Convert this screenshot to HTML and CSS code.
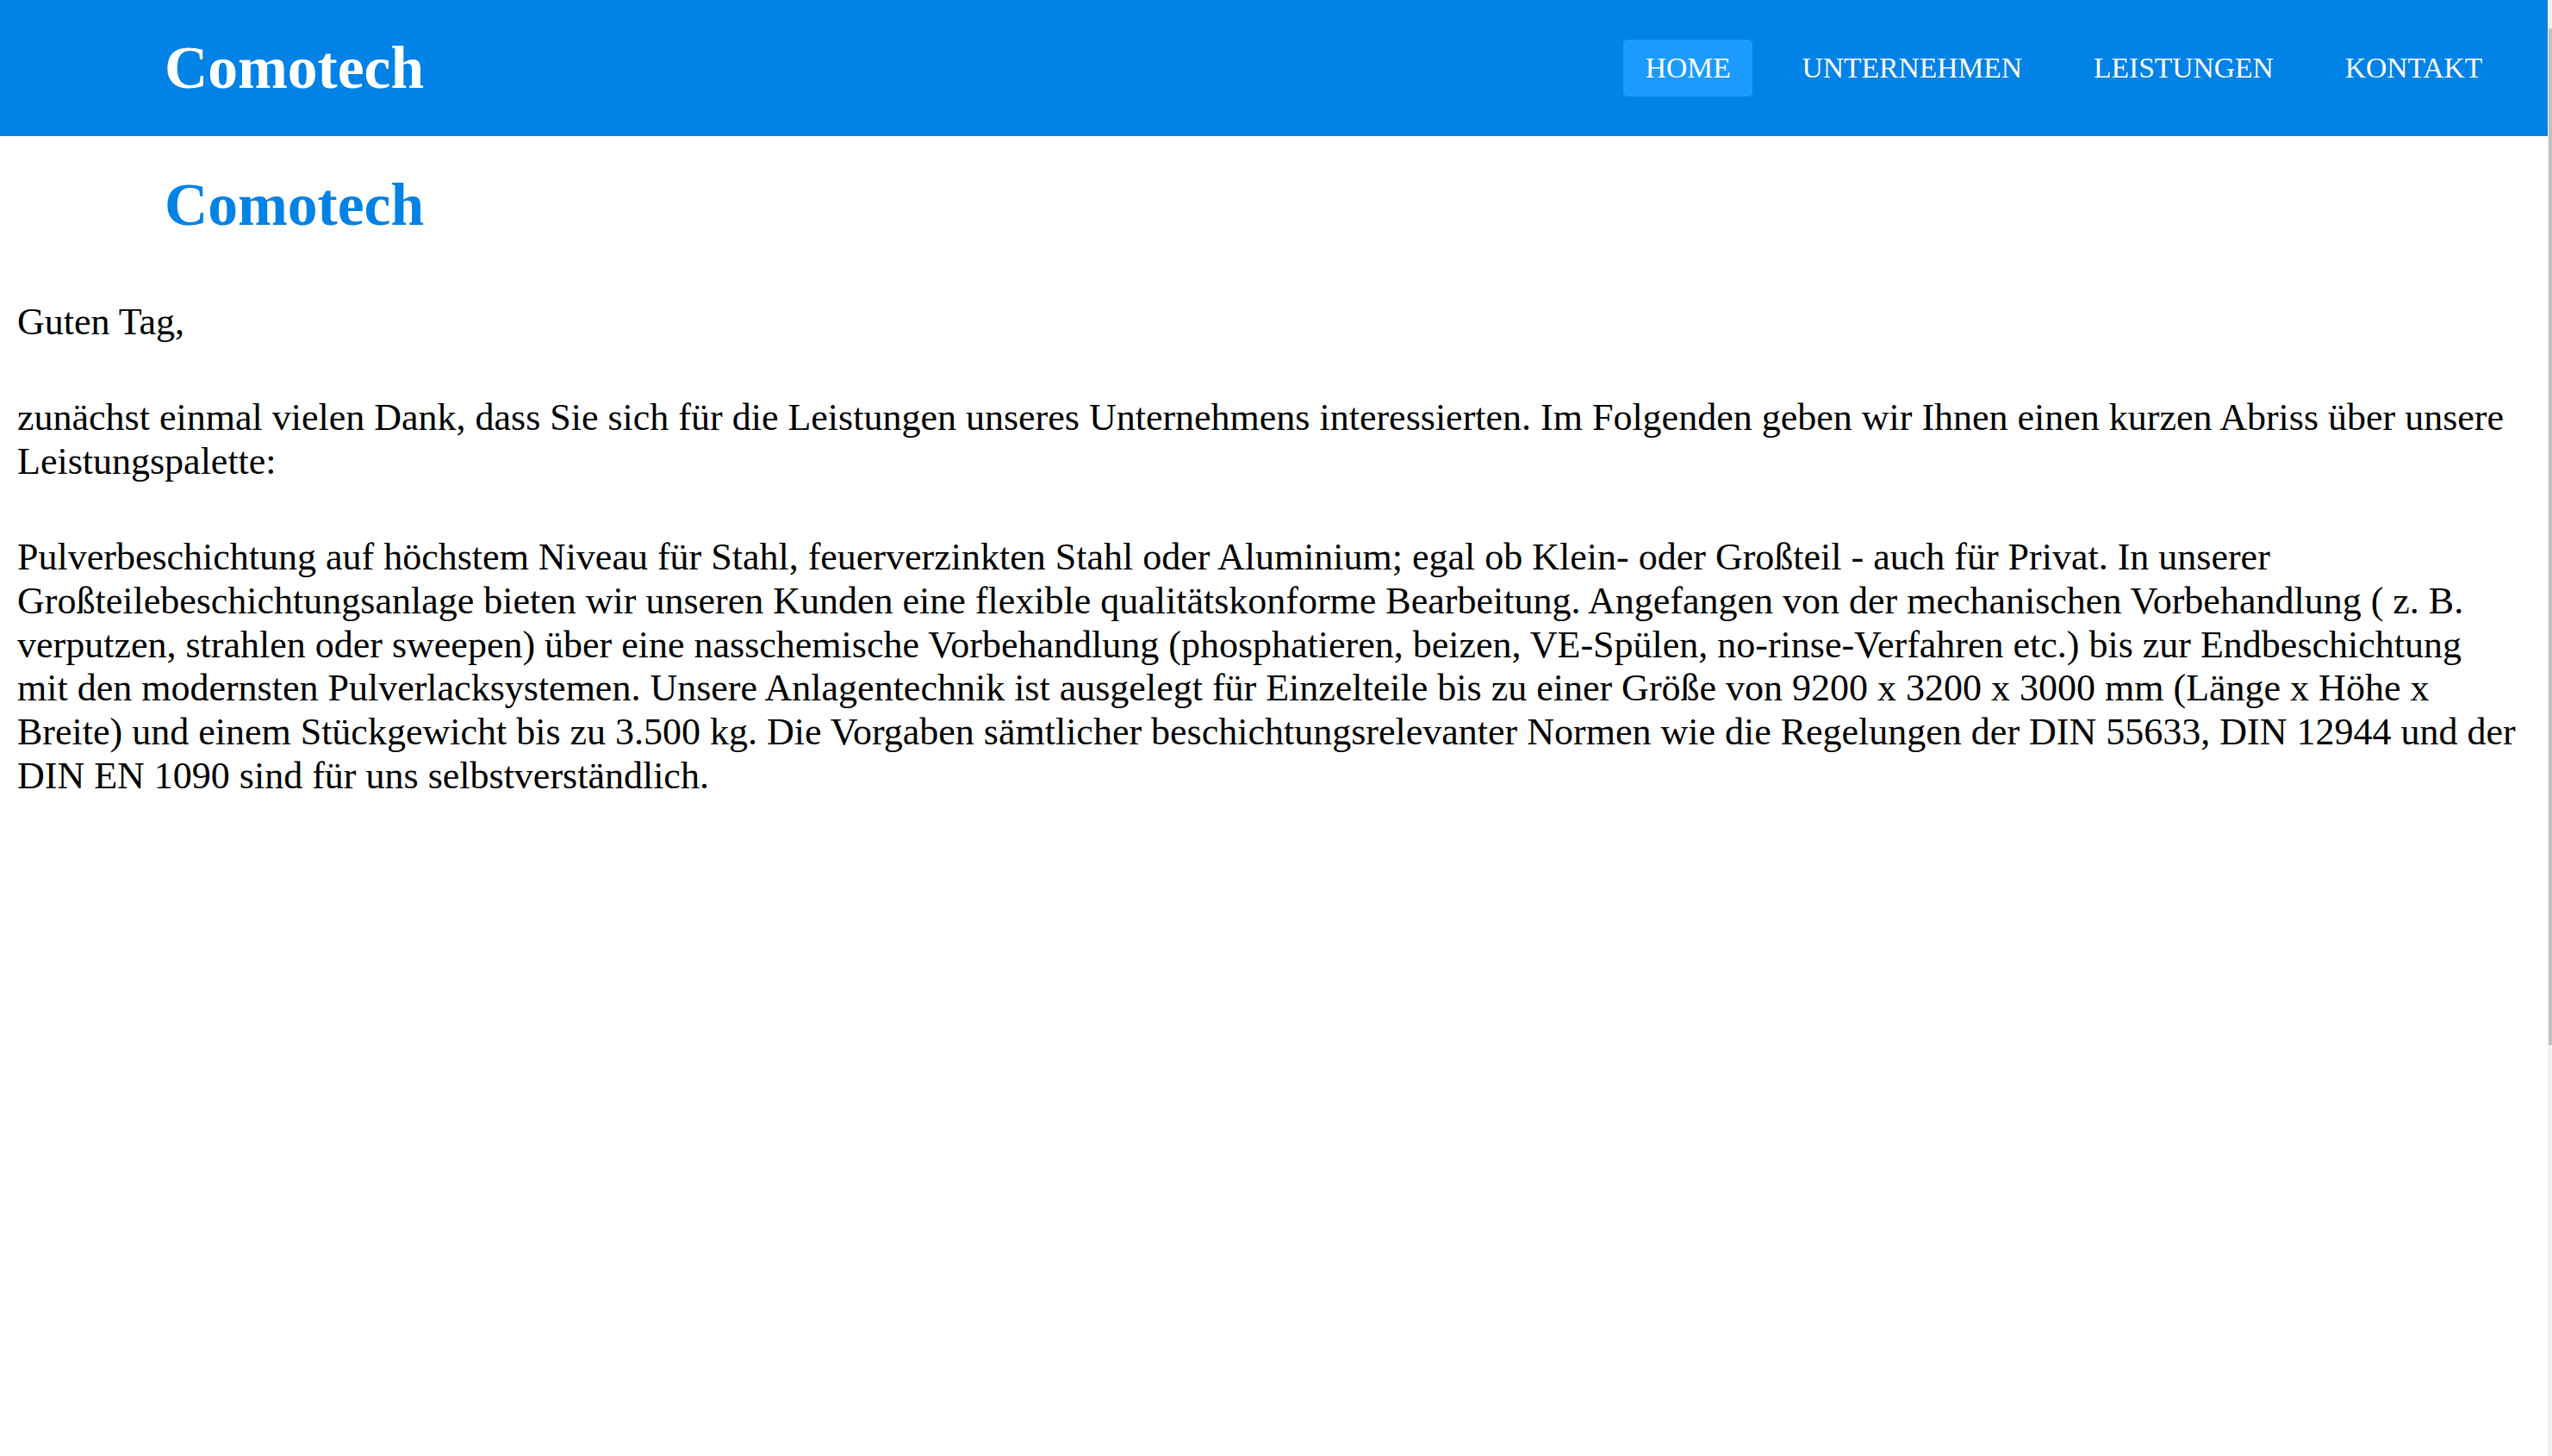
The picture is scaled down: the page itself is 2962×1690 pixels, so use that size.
FILE: index.html
```html
<!DOCTYPE html>
<html lang="de">
<head>
<meta charset="utf-8">
<title>Comotech</title>
<link rel="stylesheet" href="styles.css">
</head>
<body>
<header class="topbar">
  <div class="logo">Comotech</div>
  <nav>
    <ul class="menu">
      <li><a class="menu-link active" href="#">Home</a></li>
      <li><a class="menu-link" href="#">Unternehmen</a></li>
      <li><a class="menu-link" href="#">Leistungen</a></li>
      <li><a class="menu-link" href="#">Kontakt</a></li>
    </ul>
  </nav>
</header>
<main class="content">
  <h1 class="title">Comotech</h1>
  <p class="text">Guten Tag,</p>
  <p class="text">zunächst einmal vielen Dank, dass Sie sich für die Leistungen unseres Unternehmens interessierten. Im Folgenden geben wir Ihnen einen kurzen Abriss über unsere Leistungspalette:</p>
  <p class="text">Pulverbeschichtung auf höchstem Niveau für Stahl, feuerverzinkten Stahl oder Aluminium; egal ob Klein- oder Großteil - auch für Privat. In unserer Großteilebeschichtungsanlage bieten wir unseren Kunden eine flexible qualitätskonforme Bearbeitung. Angefangen von der mechanischen Vorbehandlung ( z. B. verputzen, strahlen oder sweepen) über eine nasschemische Vorbehandlung (phosphatieren, beizen, VE-Spülen, no-rinse-Verfahren etc.) bis zur Endbeschichtung mit den modernsten Pulverlacksystemen. Unsere Anlagentechnik ist ausgelegt für Einzelteile bis zu einer Größe von 9200 x 3200 x 3000 mm (Länge x Höhe x Breite) und einem Stückgewicht bis zu 3.500 kg. Die Vorgaben sämtlicher beschichtungsrelevanter Normen wie die Regelungen der DIN 55633, DIN 12944 und der DIN EN 1090 sind für uns selbstverständlich.</p>
</main>
<div class="scrollbar"><div class="scrollbar-thumb"></div></div>
</body>
</html>
```
FILE: styles.css
```css
html, body {
  margin: 0;
  padding: 0;
  background: #ffffff;
}

body {
  font-family: "Liberation Serif", "Times New Roman", serif;
  color: #000000;
  padding-right: 5px;
}

.topbar {
  display: flex;
  justify-content: space-between;
  align-items: center;
  height: 158px;
  background: #0082e6;
  padding: 0 50px 0 191px;
}

.logo {
  color: #ffffff;
  font-weight: bold;
  font-size: 69.5px;
  line-height: 158px;
}

.menu {
  display: flex;
  align-items: center;
  gap: 31.5px;
  list-style: none;
  margin: 0;
  padding: 0;
}

.menu-link {
  display: block;
  color: #ffffff;
  text-decoration: none;
  text-transform: uppercase;
  font-size: 33.6px;
  line-height: 37.2px;
  padding: 14px 25.7px;
  border-radius: 5px;
}

.menu-link.active {
  background: #1b9bff;
}

.content {
  padding: 0 35px 0 20px;
}

.title {
  margin: 40.4px 0 71px 171px;
  color: #0082e6;
  font-weight: bold;
  font-size: 69.5px;
  line-height: 80px;
}

.text {
  margin: 60.3px 0;
  font-size: 44px;
  line-height: 50.7px;
}

.scrollbar {
  position: fixed;
  top: 0;
  right: 0;
  width: 5px;
  height: 100%;
  background: #f1f1f1;
}

.scrollbar-thumb {
  margin: 33px 0 0 1px;
  width: 4px;
  height: 1180px;
  background: #c1c1c1;
}
```
